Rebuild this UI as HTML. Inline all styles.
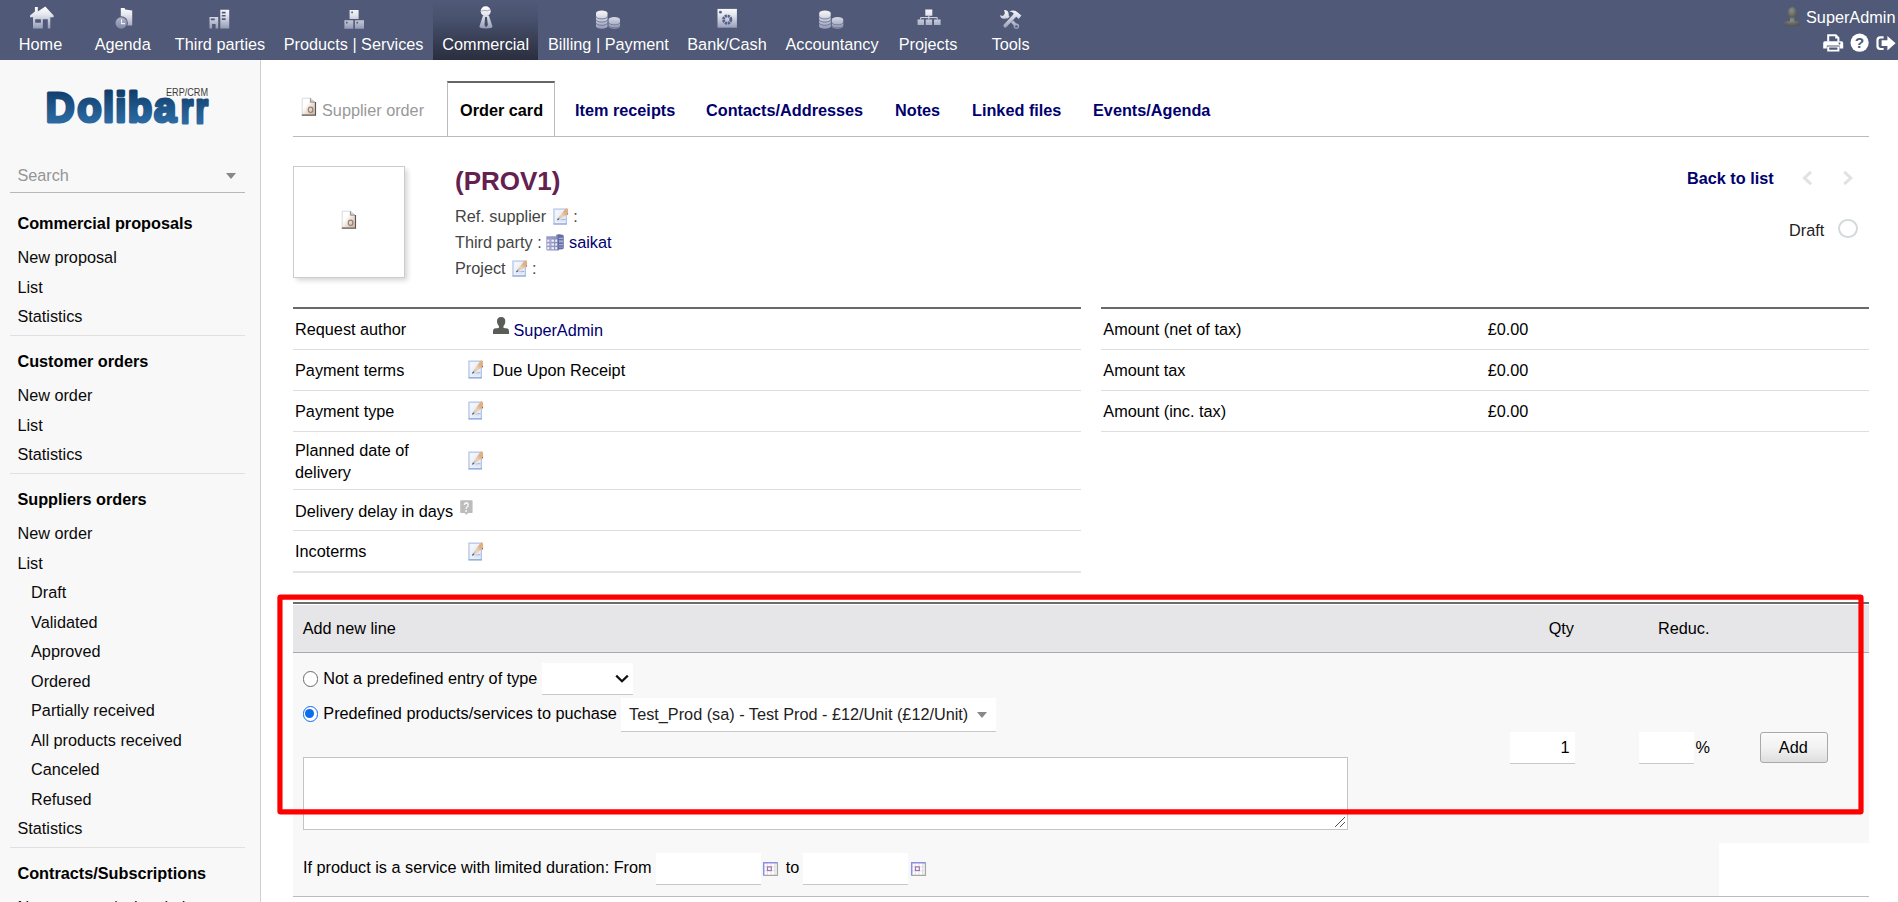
<!DOCTYPE html>
<html lang="en">
<head>
<meta charset="utf-8">
<title>Supplier order - Dolibarr</title>
<style>
*{box-sizing:border-box;margin:0;padding:0}
html,body{width:1898px;height:902px;overflow:hidden;background:#fff}
body{font-family:"Liberation Sans",Arial,sans-serif;font-size:16.25px;color:#000;position:relative}
.abs{position:absolute}
.t{position:absolute;white-space:nowrap;line-height:20px;height:20px}
a{color:inherit;text-decoration:none}
/* top nav */
#nav{position:absolute;left:0;top:0;width:1898px;height:60px;background:#505a78}
#nav .sel{position:absolute;left:433px;top:0;width:105px;height:60px;background:linear-gradient(#505a78 0%,#505a78 3%,#464f6b 35%,#2a2e3e 100%)}
#nav .m{position:absolute;top:34px;color:#fff;font-size:16.25px;line-height:20px;white-space:nowrap;transform:translateX(-50%);text-shadow:0 0 1px rgba(0,0,0,.15)}
#nav svg{position:absolute}
/* sidebar */
#side{position:absolute;left:0;top:60px;width:261px;height:842px;background:#f8f8f8;border-right:1px solid #d0d0d0}
#side .h{position:absolute;left:17.4px;font-weight:bold;white-space:nowrap;line-height:20px;color:#000}
#side .i{position:absolute;left:17.4px;white-space:nowrap;line-height:20px;color:#0a0a0a}
#side .i2{left:31px}
#side .sep{position:absolute;left:10px;width:235px;height:1px;background:#e0e0e0}
/* main */
.lnk{color:#00006e}
.row{position:absolute;height:1px;background:#dedede}
</style>
</head>
<body>
<div id="nav">
<div class="sel"></div>
<svg class="abs" style="left:0;top:0" width="1898" height="60" viewBox="0 0 1898 60">
<defs>
<linearGradient id="ng" gradientUnits="userSpaceOnUse" x1="0" y1="7" x2="0" y2="29"><stop offset="0" stop-color="#ffffff"/><stop offset="0.35" stop-color="#e4e6ee"/><stop offset="1" stop-color="#9298b4"/></linearGradient>
<linearGradient id="ng2" gradientUnits="userSpaceOnUse" x1="0" y1="7" x2="0" y2="29"><stop offset="0" stop-color="#d9dbe6"/><stop offset="1" stop-color="#7f86a6"/></linearGradient>
<filter id="soft" x="-10%" y="-10%" width="120%" height="120%"><feGaussianBlur stdDeviation="0.35"/></filter>
</defs>
<g fill="url(#ng)" filter="url(#soft)">
<!-- home -->
<path d="M34.9 7h2.9v4.6L45.3 6.6L53.6 15.6V17.2H50.3V28.6H47.8V19.3H42.8V28.6H33V17.2H30V15.6L34.9 11.6z M35.2 19.3V22.8H40.9V19.3z" fill-rule="evenodd"/>
<!-- agenda -->
<path d="M120.8 7.9H124.6L125.2 9.6L132.2 10.6V25.6H120.8z"/>
<circle cx="121.2" cy="23" r="6.7" fill="#505a78"/>
<circle cx="121.2" cy="23" r="5.7" fill="url(#ng2)"/>
<path d="M121.5 19.2V23.6H125" fill="none" stroke="#eef0f6" stroke-width="1.1"/>
<!-- third parties -->
<path d="M209.5 16.9H218.2V28.5H215.6V24H212.1V28.5H209.5z M210.8 18.4V20.2H214.8V18.4z" fill-rule="evenodd"/>
<path d="M220.3 9.8H229.2V28.5H220.3z M221.8 11.8V13.4H225.6V11.8z M221.8 14.9V16.5H225.6V14.9z M221.8 18.2V19.9H225.6V18.2z" fill-rule="evenodd"/>
<!-- products -->
<path d="M349.6 10H358.6V19H349.6z M351.3 11.6V13.3H352.9V11.6z" fill-rule="evenodd"/>
<path d="M344.4 20.3H353.3V28.7H344.4z M346 21.8V23.4H347.6V21.8z" fill-rule="evenodd"/>
<path d="M354.9 20.3H364V28.7H354.9z M356.5 21.8V23.4H358.1V21.8z" fill-rule="evenodd"/>
<!-- commercial -->
<circle cx="485.7" cy="11.2" r="5"/>
<path d="M483 15.6H488.9L492.5 26.4Q492.6 28.2 486 28.4Q479.2 28.2 479.4 26.4z"/>
<path d="M485.1 16.9H486.9L487.9 25L486 27.6L484.5 25z" fill="#454d69"/>
<path d="M481.2 11.2L484.6 10.3L487.4 10.8L490 9.8" stroke="#7c84a0" stroke-width="0.7" fill="none"/>
<!-- billing coins -->
<g id="coins">
<path d="M596 13.2A5.75 2.7 0 0 1 607.5 13.2V26.2A5.75 2.5 0 0 1 596 26.2z"/>
<path d="M596 16.4A5.75 2.5 0 0 0 607.5 16.4M596 19.6A5.75 2.5 0 0 0 607.5 19.6M596 22.8A5.75 2.5 0 0 0 607.5 22.8" stroke="#6b7394" stroke-width="0.9" fill="none"/>
<path d="M608.6 19.4A5.7 2.5 0 0 1 620 19.4V26.2A5.7 2.5 0 0 1 608.6 26.2z"/>
<path d="M608.6 22.4A5.7 2.5 0 0 0 620 22.4M608.6 25.2A5.7 2.5 0 0 0 620 25.2" stroke="#6b7394" stroke-width="0.9" fill="none"/>
</g>
<use href="#coins" x="223.2" y="0"/>
<!-- bank -->
<path d="M717.5 8.9H736.9V27.7H717.5z"/>
<circle cx="727.2" cy="19.6" r="3.7" fill="none" stroke="#56608a" stroke-width="2.8" stroke-dasharray="2.2 0.706"/>
<circle cx="720.4" cy="12.2" r="1.4" fill="#56608a"/>
<!-- projects -->
<path d="M925.3 9.6H932.3V15.7H925.3z M917.6 19.4H924V24.9H917.6z M925.7 19.4H932.1V24.9H925.7z M934 19.4H940.6V24.9H934z"/>
<path d="M928.8 15.7V17.6M920.6 19.4V17.6H937.2V19.4M928.8 17.6V19.4" stroke="#d8dbe6" stroke-width="1" fill="none"/>
<!-- tools -->
<path d="M1006.5 15.5L1016 25.6" stroke="url(#ng)" stroke-width="3" stroke-linecap="round" fill="none"/>
<path d="M1004.1 10A4.4 4.4 0 1 1 1000 15.3L1003 15.9L1004.9 13.4z"/>
<circle cx="1016.4" cy="26.3" r="2.7"/>
<circle cx="1016.4" cy="26.4" r="1.2" fill="#505a78"/>
<path d="M1015.6 14.6L1003.2 26.4" stroke="#505a78" stroke-width="5.4" stroke-linecap="butt" fill="none"/>
<path d="M1014.8 15.6L1005.2 25.8" stroke="url(#ng)" stroke-width="3.6" stroke-linecap="round" fill="none"/>
<path d="M1009.3 11.5Q1013.6 9.3 1016.8 11.7L1021.4 15.6L1018.7 18.9L1016.6 16.9Q1015.8 16.7 1015.2 17.2L1013.2 15Q1014 14 1013.4 13.1Q1012 11.5 1009.3 11.5z"/>
</g>
</svg>
<span class="m" style="left:40.5px">Home</span>
<span class="m" style="left:122.7px">Agenda</span>
<span class="m" style="left:220px">Third parties</span>
<span class="m" style="left:353.6px">Products | Services</span>
<span class="m" style="left:485.7px">Commercial</span>
<span class="m" style="left:608.4px">Billing | Payment</span>
<span class="m" style="left:727px">Bank/Cash</span>
<span class="m" style="left:832px">Accountancy</span>
<span class="m" style="left:928px">Projects</span>
<span class="m" style="left:1010.6px">Tools</span>
<span class="t" style="left:1806px;top:7px;color:#fff">SuperAdmin</span>
<svg class="abs" style="left:1780px;top:0" width="118" height="60" viewBox="1780 0 118 60">
<defs>
<radialGradient id="ug" cx="0.45" cy="0.3" r="0.8"><stop offset="0" stop-color="#8b8e8a"/><stop offset="0.6" stop-color="#5e625d"/><stop offset="1" stop-color="#4a4e4a"/></radialGradient>
<filter id="soft2" x="-10%" y="-10%" width="120%" height="120%"><feGaussianBlur stdDeviation="0.4"/></filter>
</defs>
<g filter="url(#soft2)" fill="url(#ug)">
<ellipse cx="1792.2" cy="13.3" rx="4.7" ry="6.3"/>
<path d="M1790 17.5H1794.4V21Q1800.6 21.6 1800.7 23.2Q1800.4 26.4 1792.2 26.6Q1783.8 26.4 1783.6 23.2Q1783.8 21.6 1790 21z"/>
</g>
<g fill="#fff">
<!-- print -->
<path d="M1827.2 34.3H1836.2L1839.4 37.5V41.4H1837.4V38.4H1835.2V36.2H1829.2V41.4H1827.2z"/>
<path d="M1825 41.2H1841.4Q1843.2 41.2 1843.2 43V48.4H1839.6V45.6H1826.8V48.4H1823.2V43Q1823.2 41.2 1825 41.2z M1839.5 42.6a0.9 0.9 0 1 0 0.01 0z" fill-rule="evenodd"/>
<path d="M1827.2 46.6H1839.4V51.6H1827.2z M1829.2 47.6V49.8H1837.4V47.6z" fill-rule="evenodd"/>
<!-- help -->
<circle cx="1859.6" cy="42.7" r="9.1"/>
<!-- logout -->
<path d="M1883.6 36.3H1880.2Q1876.4 36.3 1876.4 40.1V46.3Q1876.4 50.1 1880.2 50.1H1883.6V47.9H1880.4Q1878.6 47.9 1878.6 46.1V40.3Q1878.6 38.5 1880.4 38.5H1883.6z"/>
<path d="M1881.6 40.3H1887.4V35.9L1895.6 43.2L1887.4 50.5V46.1H1881.6z"/>
</g>
<text x="1859.6" y="48.3" font-family="Liberation Sans, Arial, sans-serif" font-weight="bold" font-size="15.5" text-anchor="middle" fill="#505a78">?</text>
</svg>
</div>

<div id="side">
<svg class="abs" style="left:30px;top:15px" width="200" height="65" viewBox="30 75 200 65">
<defs><linearGradient id="lg" gradientUnits="userSpaceOnUse" x1="0" y1="90" x2="0" y2="125"><stop offset="0" stop-color="#0f3b68"/><stop offset="0.5" stop-color="#1f5588"/><stop offset="1" stop-color="#2e6ea6"/></linearGradient><linearGradient id="lg2" gradientUnits="userSpaceOnUse" x1="0" y1="-31" x2="0" y2="2.4"><stop offset="0" stop-color="#0f3b68"/><stop offset="0.5" stop-color="#1f5588"/><stop offset="1" stop-color="#2e6ea6"/></linearGradient></defs>
<text transform="translate(0,122.5) scale(1,1.045) translate(0,-122.5)" x="45.7 77.3 103 115.3 127.7 154" y="122.5" font-family="Liberation Sans, Arial, sans-serif" font-weight="bold" font-size="40" fill="url(#lg)" stroke="url(#lg)" stroke-width="3" stroke-linejoin="round">Doliba</text><text transform="translate(181.4,122.5) scale(0.8,1.045)" x="-0.7 17.6" y="0" font-family="Liberation Sans, Arial, sans-serif" font-weight="bold" font-size="40" fill="url(#lg2)" stroke="url(#lg2)" stroke-width="3" stroke-linejoin="round">rr</text>
<text x="166" y="95.6" font-family="Liberation Sans, Arial, sans-serif" font-size="11" textLength="42" lengthAdjust="spacingAndGlyphs" fill="#3c3c3c">ERP/CRM</text>
</svg>
<span class="t" style="left:17.4px;top:105px;color:#959595">Search</span>
<div class="abs" style="left:226px;top:113px;width:0;height:0;border-left:5px solid transparent;border-right:5px solid transparent;border-top:6px solid #888"></div>
<div class="abs" style="left:10px;top:132px;width:235px;height:1px;background:#b8b8b8"></div>
<a class="h" style="top:153.4px">Commercial proposals</a>
<a class="i" style="top:187.4px">New proposal</a>
<a class="i" style="top:217.4px">List</a>
<a class="i" style="top:246.4px">Statistics</a>
<div class="sep" style="top:275px"></div>
<a class="h" style="top:291.4px">Customer orders</a>
<a class="i" style="top:325.4px">New order</a>
<a class="i" style="top:355.4px">List</a>
<a class="i" style="top:384.4px">Statistics</a>
<div class="sep" style="top:413px"></div>
<a class="h" style="top:429.4px">Suppliers orders</a>
<a class="i" style="top:463.4px">New order</a>
<a class="i" style="top:493.4px">List</a>
<a class="i i2" style="top:522.4px">Draft</a>
<a class="i i2" style="top:552.4px">Validated</a>
<a class="i i2" style="top:581.4px">Approved</a>
<a class="i i2" style="top:611.4px">Ordered</a>
<a class="i i2" style="top:640.4px">Partially received</a>
<a class="i i2" style="top:670.4px">All products received</a>
<a class="i i2" style="top:699.4px">Canceled</a>
<a class="i i2" style="top:729.4px">Refused</a>
<a class="i" style="top:758.4px">Statistics</a>
<div class="sep" style="top:787px"></div>
<a class="h" style="top:803.4px">Contracts/Subscriptions</a>
<a class="i" style="top:837.4px">New contract/subscription</a>
</div>

<svg width="0" height="0" style="position:absolute">
<defs>
<linearGradient id="docg" x1="0" y1="0" x2="1" y2="1"><stop offset="0.35" stop-color="#ffffff"/><stop offset="1" stop-color="#d9a98a"/></linearGradient>
<linearGradient id="edg" x1="0" y1="0" x2="1" y2="1"><stop offset="0" stop-color="#ffffff"/><stop offset="1" stop-color="#cfdcf2"/></linearGradient>
<linearGradient id="qg" x1="1" y1="0" x2="0" y2="1"><stop offset="0" stop-color="#e0b184"/><stop offset="0.3" stop-color="#dfb080"/><stop offset="0.62" stop-color="#ecd3bd"/><stop offset="0.85" stop-color="#c8bdb4"/><stop offset="1" stop-color="#777"/></linearGradient>
<linearGradient id="cog" x1="0" y1="0" x2="1" y2="0"><stop offset="0" stop-color="#9a9cc6"/><stop offset="0.6" stop-color="#8e92bf"/><stop offset="0.7" stop-color="#5f6aa0"/><stop offset="1" stop-color="#6a74a8"/></linearGradient>
<filter id="b3" x="-10%" y="-10%" width="120%" height="120%"><feGaussianBlur stdDeviation="0.3"/></filter>
<filter id="b4" x="-10%" y="-10%" width="120%" height="120%"><feGaussianBlur stdDeviation="0.45"/></filter>
<symbol id="idoc" viewBox="0 0 16 20" overflow="visible">
<g filter="url(#b3)">
<path d="M1.2 1.2H9.4L14 5.2V17.6H1.2z" fill="url(#docg)" stroke="#d6d6d6" stroke-width="0.9"/>
<path d="M9.4 1.2V5.2H14" fill="#cfcfcf" stroke="#8a8a8a" stroke-width="0.9"/>
<path d="M14.5 5V18.1H0.8" fill="none" stroke="#555" stroke-width="1.15"/>
<ellipse cx="9.6" cy="12.8" rx="2.3" ry="2.7" fill="none" stroke="#8a8580" stroke-width="1.2"/>
</g>
</symbol>
<symbol id="iedit" viewBox="0 0 17 20" preserveAspectRatio="none" overflow="visible">
<g filter="url(#b3)">
<rect x="1" y="1.2" width="13" height="17" fill="url(#edg)" stroke="#b4c5e8" stroke-width="1.35"/>
<path d="M0.6 18.3H14.6" stroke="#8fa8d9" stroke-width="1.2"/>
<rect x="2.6" y="2.8" width="9.8" height="13.8" fill="none" stroke="#eef3fc" stroke-width="1"/>
<path d="M7 13.4L13 12.2V13.6H7z" fill="#a9b2c4"/>
<path d="M4.2 13.6L6 10.4L9.2 6.2L12.4 1.8L14.2 0.3L15.6 0.9L15.9 4.4L15.2 7.2L11.6 9.6L7.6 12L5.2 13.8z" fill="url(#qg)"/>
<path d="M4.2 13.8L5.3 11.8L6.9 12.5L5.2 13.9z" fill="#5e5e5e"/>
<path d="M15.1 6.2L15.9 6L15.6 7.6L14.8 7.4z" fill="#5a4a3a"/>
</g>
</symbol>
<symbol id="icomp" viewBox="0 0 18 17" overflow="visible">
<g filter="url(#b3)">
<path d="M0.3 2.3H10V1Q10.2 0.2 13 0.2Q17.6 0.3 17.8 2V14.2Q17.6 15.4 13 15.4L12.4 16.6H1.2L0.3 15.4z" fill="url(#cog)"/>
<g fill="#eeeef8">
<rect x="1.2" y="5.6" width="2.2" height="2.2"/><rect x="5.4" y="5.6" width="2.6" height="2.2"/><rect x="9.2" y="5.6" width="2" height="2.2"/>
<rect x="1.2" y="9.4" width="2.2" height="2.2"/><rect x="5.4" y="9.4" width="2.6" height="2.2"/><rect x="9.2" y="9.4" width="2" height="2.2"/>
<rect x="1.2" y="13.1" width="2.2" height="2.2"/><rect x="5.4" y="13.1" width="2.6" height="2.2"/><rect x="9.2" y="13.1" width="2" height="2.2"/>
</g>
<g fill="#a9b0d0"><rect x="13" y="3.8" width="4.2" height="1.2"/><rect x="13" y="6.4" width="4.2" height="2"/><rect x="13" y="10" width="4.2" height="1.2"/><rect x="13" y="12.4" width="4.2" height="1.4" fill="#8d95bd"/></g>
<path d="M4.2 3.6V16.4" stroke="#aeb4d6" stroke-width="0.8"/>
</g>
</symbol>
<symbol id="iuser" viewBox="0 0 16 17" overflow="visible">
<g filter="url(#b4)" fill="#5a5d57">
<path d="M8.2 0Q12.4 0 12.3 4.6Q12.2 8 10.4 9.2L10.6 11L14.6 11.6Q16 12.2 16 14V17H0V14Q0 12.2 1.4 11.6L5.8 11L6 9.2Q4.1 8 4 4.6Q3.9 0 8.2 0z"/>
</g>
</symbol>
<symbol id="ihelp" viewBox="0 0 13 16" overflow="visible">
<g filter="url(#b4)">
<path d="M1 0.2H11.8Q12.6 0.2 12.6 1V12.2Q12.6 13 11.8 13H8L6.4 15L4.8 13H1Q0.2 13 0.2 12.2V1Q0.2 0.2 1 0.2z" fill="#bcbcbc"/>
</g>
</symbol>
<symbol id="ical" viewBox="0 0 15 14" overflow="visible">
<g filter="url(#b3)">
<rect x="0.5" y="0.5" width="14" height="13" fill="#ffffff"/>
<path d="M4.2 1V13M8 1V13M11.6 1V13M1 4.8H14M1 8.8H14" stroke="#dcdcdc" stroke-width="0.9"/>
<rect x="11.6" y="1" width="2.6" height="12" fill="#e6e6e6" opacity="0.7"/>
<path d="M0.4 13.4H14.5V0.6" fill="none" stroke="#a6a6a6" stroke-width="1.1"/>
<path d="M0.7 13.4V0.7H14.6" fill="none" stroke="#8c90e4" stroke-width="1.5"/>
<rect x="4.5" y="4.9" width="3.8" height="3.6" fill="#fff" stroke="#a56fb7" stroke-width="1.2"/>
</g>
</symbol>
</defs>
</svg>
<div id="main">
<div class="abs" style="left:293px;top:136px;width:1576px;height:1px;background:#bbb"></div>
<div class="abs" style="left:447px;top:81px;width:108px;height:55px;background:#fff;border:1px solid #bbb;border-top:2px solid #666;border-bottom:none"></div>
<svg class="abs" style="left:301.4px;top:97.4px;overflow:visible" width="16" height="20"><use href="#idoc" width="16" height="20"/></svg>
<span class="t" style="left:322px;top:100.4px;color:#999">Supplier order</span>
<span class="t" style="left:460px;top:100.4px;font-weight:bold;color:#000">Order card</span>
<a class="t lnk" style="left:575px;top:100.4px;font-weight:bold">Item receipts</a>
<a class="t lnk" style="left:706px;top:100.4px;font-weight:bold">Contacts/Addresses</a>
<a class="t lnk" style="left:895px;top:100.4px;font-weight:bold">Notes</a>
<a class="t lnk" style="left:972px;top:100.4px;font-weight:bold">Linked files</a>
<a class="t lnk" style="left:1093px;top:100.4px;font-weight:bold">Events/Agenda</a>
<div class="abs" style="left:293px;top:166px;width:112px;height:112px;background:#fff;border:1px solid #ccc;box-shadow:2.5px 2.5px 5px #d6d6d6"></div>
<svg class="abs" style="left:341.4px;top:210.2px;overflow:visible" width="16" height="20"><use href="#idoc" width="16" height="20"/></svg>
<span class="t" style="left:455px;top:165.0px;font-size:26px;line-height:32px;height:32px;font-weight:bold;color:#64204f">(PROV1)</span>
<span class="t" style="left:455px;top:206.4px;color:#444">Ref. supplier</span>
<svg class="abs" style="left:553.1px;top:208.3px;overflow:visible" width="16.2" height="17.5"><use href="#iedit" width="16.2" height="17.5"/></svg>
<span class="t" style="left:573.3px;top:206.4px;color:#444">:</span>
<span class="t" style="left:455px;top:231.9px;color:#444">Third party :</span>
<svg class="abs" style="left:546px;top:234px;overflow:visible" width="18" height="17"><use href="#icomp" width="18" height="17"/></svg>
<a class="t lnk" style="left:569px;top:231.9px;">saikat</a>
<span class="t" style="left:455px;top:257.7px;color:#444">Project</span>
<svg class="abs" style="left:511.9px;top:259.9px;overflow:visible" width="16.2" height="17.5"><use href="#iedit" width="16.2" height="17.5"/></svg>
<span class="t" style="left:532px;top:257.7px;color:#444">:</span>
<a class="t lnk" style="left:1687px;top:168.4px;font-weight:bold">Back to list</a>
<svg class="abs" style="left:1798px;top:166px" width="60" height="24" viewBox="1798 166 60 24"><path d="M1811 171.8L1804.4 178L1811 184.2M1844.2 171.8L1850.8 178L1844.2 184.2" fill="none" stroke="#e2e2e2" stroke-width="3"/></svg>
<span class="t" style="left:1789px;top:220.4px;color:#222">Draft</span>
<div class="abs" style="left:1838.4px;top:218.9px;width:19.2px;height:19.2px;border-radius:50%;border:2px solid #d3dadb"></div>
<div class="abs" style="left:293px;top:307px;width:788px;height:2px;background:#696969"></div>
<div class="abs" style="left:1101px;top:307px;width:768px;height:2px;background:#696969"></div>
<div class="row" style="left:293px;top:349px;width:788px"></div>
<div class="row" style="left:293px;top:390px;width:788px"></div>
<div class="row" style="left:293px;top:431px;width:788px"></div>
<div class="row" style="left:293px;top:489px;width:788px"></div>
<div class="row" style="left:293px;top:530px;width:788px"></div>
<div class="row" style="left:293px;top:571px;width:788px;height:2px;background:#e4e4e4"></div>
<div class="row" style="left:1101px;top:349px;width:768px"></div>
<div class="row" style="left:1101px;top:390px;width:768px"></div>
<div class="row" style="left:1101px;top:431px;width:768px"></div>
<span class="t" style="left:295px;top:319.4px;">Request author</span>
<svg class="abs" style="left:493px;top:317px;overflow:visible" width="16" height="17"><use href="#iuser" width="16" height="17"/></svg>
<a class="t lnk" style="left:513.5px;top:319.9px;">SuperAdmin</a>
<span class="t" style="left:295px;top:360.4px;">Payment terms</span>
<svg class="abs" style="left:468.0px;top:360.4px;overflow:visible" width="16.2" height="19.5"><use href="#iedit" width="16.2" height="19.5"/></svg>
<span class="t" style="left:492.4px;top:360.4px;">Due Upon Receipt</span>
<span class="t" style="left:295px;top:401.4px;">Payment type</span>
<svg class="abs" style="left:468.0px;top:401.4px;overflow:visible" width="16.2" height="19.5"><use href="#iedit" width="16.2" height="19.5"/></svg>
<span class="t" style="left:295px;top:440.0px;">Planned date of</span>
<span class="t" style="left:295px;top:461.8px;">delivery</span>
<svg class="abs" style="left:468.0px;top:450.8px;overflow:visible" width="16.2" height="19.5"><use href="#iedit" width="16.2" height="19.5"/></svg>
<span class="t" style="left:295px;top:501.0px;">Delivery delay in days</span>
<svg class="abs" style="left:460.2px;top:500px;overflow:visible" width="13" height="16"><use href="#ihelp" width="13" height="16"/></svg><span class="t" style="left:462.2px;top:497.2px;font-size:14px;font-weight:bold;color:#f6f6f6;transform:scaleX(0.72);transform-origin:50% 50%">?</span>
<span class="t" style="left:295px;top:540.9px;">Incoterms</span>
<svg class="abs" style="left:468.0px;top:542.0px;overflow:visible" width="16.2" height="19.5"><use href="#iedit" width="16.2" height="19.5"/></svg>
<span class="t" style="left:1103.3px;top:319.4px;">Amount (net of tax)</span>
<span class="t" style="left:1487.7px;top:319.4px;">£0.00</span>
<span class="t" style="left:1103.3px;top:360.4px;">Amount tax</span>
<span class="t" style="left:1487.7px;top:360.4px;">£0.00</span>
<span class="t" style="left:1103.3px;top:401.4px;">Amount (inc. tax)</span>
<span class="t" style="left:1487.7px;top:401.4px;">£0.00</span>
<div class="abs" style="left:293px;top:602px;width:1576px;height:2px;background:#6c6c6c"></div>
<div class="abs" style="left:293px;top:605px;width:1576px;height:47px;background:#e6e6e8"></div>
<div class="abs" style="left:293px;top:652px;width:1576px;height:1px;background:#aaa"></div>
<div class="abs" style="left:293px;top:653px;width:1576px;height:243px;background:#f8f8f8"></div>
<div class="abs" style="left:293px;top:896px;width:1576px;height:1px;background:#bbb"></div>
<div class="abs" style="left:1719px;top:843px;width:150px;height:53px;background:#fff"></div>
<span class="t" style="left:302.7px;top:618.4px;">Add new line</span>
<span class="t" style="left:1548.7px;top:618.4px;">Qty</span>
<span class="t" style="left:1658px;top:618.4px;">Reduc.</span>
<div class="abs" style="left:302.7px;top:671.3px;width:15.5px;height:15.5px;border-radius:50%;border:1.3px solid #6a6a6a;background:#fff"></div>
<span class="t" style="left:323.3px;top:668.1px;">Not a predefined entry of type</span>
<div class="abs" style="left:542px;top:662.5px;width:91px;height:32px;background:#fff;border-bottom:1px solid #c8c8c8"></div>
<svg class="abs" style="left:614px;top:672px" width="16" height="14" viewBox="0 0 16 14"><path d="M2.2 3.6 L8 9.3 L13.8 3.6" fill="none" stroke="#111" stroke-width="2.2"/></svg>
<div class="abs" style="left:302.7px;top:706.3px;width:15.5px;height:15.5px;border-radius:50%;border:1.6px solid #0b6cf0;background:#fff"><div style="position:absolute;left:1.75px;top:1.75px;width:8.8px;height:8.8px;border-radius:50%;background:#0b6cf0"></div></div>
<span class="t" style="left:323.3px;top:703.2px;">Predefined products/services to puchase</span>
<div class="abs" style="left:621px;top:697.5px;width:375px;height:34px;background:#fff;border-bottom:1px solid #c8c8c8"></div>
<span class="t" style="left:629px;top:704.4px;color:#222">Test_Prod (sa) - Test Prod - £12/Unit (£12/Unit)</span>
<div class="abs" style="left:977px;top:712px;width:0;height:0;border-left:5px solid transparent;border-right:5px solid transparent;border-top:6px solid #888"></div>
<div class="abs" style="left:303px;top:757px;width:1045px;height:73px;background:#fff;border:1px solid #c4c4c4"></div>
<svg class="abs" style="left:1333px;top:815px" width="14" height="14" viewBox="0 0 14 14"><path d="M2 12 L12 2 M7 12 L12 7" stroke="#555" stroke-width="1" fill="none"/></svg>
<div class="abs" style="left:1510px;top:732px;width:64.5px;height:32px;background:#fff;border-bottom:1px solid #c8c8c8"></div>
<span class="t" style="left:1560.5px;top:737.4px;">1</span>
<div class="abs" style="left:1639px;top:732px;width:55px;height:32px;background:#fff;border-bottom:1px solid #c8c8c8"></div>
<span class="t" style="left:1695.4px;top:737.4px;">%</span>
<div class="abs" style="left:1760px;top:732px;width:68px;height:31px;border:1px solid #a9a9a9;border-radius:3px;background:linear-gradient(#fafafa,#f2f2f2 50%,#dedede)"></div>
<span class="t" style="left:1778.8px;top:737.4px;">Add</span>
<span class="t" style="left:303px;top:857.2px;">If product is a service with limited duration: From</span>
<div class="abs" style="left:656px;top:853px;width:105px;height:32px;background:#fff;border-bottom:1px solid #c8c8c8"></div>
<svg class="abs" style="left:763px;top:862px;overflow:visible" width="15" height="14"><use href="#ical" width="15" height="14"/></svg>
<span class="t" style="left:785.8px;top:857.2px;">to</span>
<div class="abs" style="left:803px;top:853px;width:105px;height:32px;background:#fff;border-bottom:1px solid #c8c8c8"></div>
<svg class="abs" style="left:911px;top:862px;overflow:visible" width="15" height="14"><use href="#ical" width="15" height="14"/></svg>
<svg class="abs" style="left:270px;top:588px" width="1600" height="232" viewBox="270 588 1600 232"><rect x="279.95" y="597.1" width="1581.05" height="214.75" rx="0.7" fill="none" stroke="#ff0000" stroke-width="5.2"/></svg>
</div>
</body>
</html>
